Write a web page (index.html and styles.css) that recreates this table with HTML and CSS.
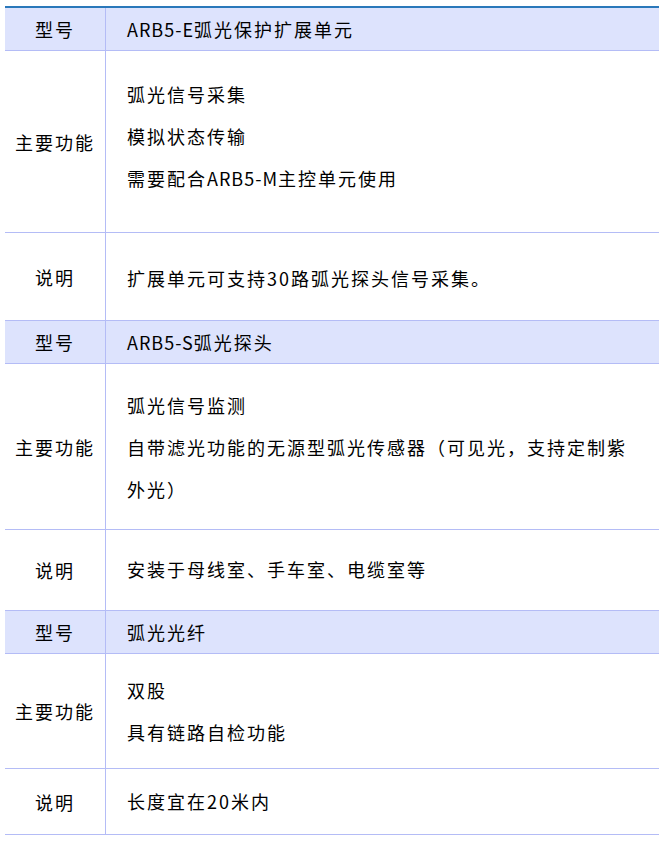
FILE: index.html
```html
<!DOCTYPE html>
<html lang="zh-CN">
<head>
<meta charset="utf-8">
<title>弧光保护产品参数</title>
<link rel="stylesheet" href="styles.css">
</head>
<body>
<table class="spec">
  <tbody>
    <tr class="head">
      <td class="label">型号</td>
      <td class="value"><span class="latin">ARB5-E</span>弧光保护扩展单元</td>
    </tr>
    <tr class="r2">
      <td class="label">主要功能</td>
      <td class="value">
        <p>弧光信号采集</p>
        <p>模拟状态传输</p>
        <p>需要配合<span class="latin">ARB5-M</span>主控单元使用</p>
      </td>
    </tr>
    <tr class="r3">
      <td class="label">说明</td>
      <td class="value"><p>扩展单元可支持30路弧光探头信号采集。</p></td>
    </tr>
    <tr class="head">
      <td class="label">型号</td>
      <td class="value"><span class="latin">ARB5-S</span>弧光探头</td>
    </tr>
    <tr class="r5">
      <td class="label">主要功能</td>
      <td class="value">
        <p>弧光信号监测</p>
        <p>自带滤光功能的无源型弧光传感器（可见光，支持定制紫外光）</p>
      </td>
    </tr>
    <tr class="r6">
      <td class="label">说明</td>
      <td class="value"><p>安装于母线室、手车室、电缆室等</p></td>
    </tr>
    <tr class="head">
      <td class="label">型号</td>
      <td class="value">弧光光纤</td>
    </tr>
    <tr class="r8">
      <td class="label">主要功能</td>
      <td class="value">
        <p>双股</p>
        <p>具有链路自检功能</p>
      </td>
    </tr>
    <tr class="r9">
      <td class="label">说明</td>
      <td class="value"><p>长度宜在20米内</p></td>
    </tr>
  </tbody>
</table>
</body>
</html>
```

FILE: styles.css
```css
html, body {
  margin: 0;
  padding: 0;
  background: #ffffff;
}

body {
  padding: 6px 4px 0 5px;
  font-family: "Noto Sans CJK SC", "Noto Sans", sans-serif;
  font-size: 18px;
  font-weight: 400;
  color: #000000;
}

.spec {
  width: 654px;
  border-collapse: collapse;
  border-top: 2px solid #2a78ba;
}

.spec td {
  border-bottom: 1px solid #b4bcf6;
  vertical-align: middle;
  letter-spacing: 2px;
}

.spec .latin {
  letter-spacing: 1px;
}

.spec .label {
  width: 100px;
  text-align: center;
  padding: 0;
  border-right: 1px solid #b4bcf6;
}

.spec .value {
  text-align: left;
  padding: 0 15px 0 21px;
}

.spec p {
  margin: 0;
  line-height: 42px;
}

.head td {
  background: #dde3fd;
  height: 42px;
  line-height: 42px;
}

.r2 .value { padding-top: 22px; padding-bottom: 33px; }
.r3 .value { padding-top: 24px; padding-bottom: 21px; }
.r5 .value { padding-top: 20px; padding-bottom: 19px; }
.r6 .value { padding-top: 18px; padding-bottom: 20px; }
.r8 .value { padding-top: 15px; padding-bottom: 15px; }
.r9 .value { padding-top: 11px; padding-bottom: 12px; }
```
